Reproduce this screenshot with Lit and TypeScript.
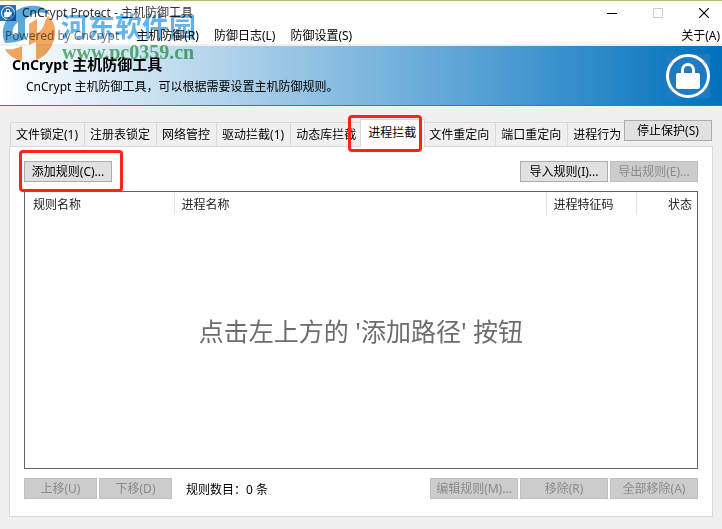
import { LitElement, html, css, svg } from "lit";
import { customElement, state } from "lit/decorators.js";

const TABS = [
  "文件锁定(1)",
  "注册表锁定",
  "网络管控",
  "驱动拦截(1)",
  "动态库拦截",
  "进程拦截",
  "文件重定向",
  "端口重定向",
  "进程行为",
];

const MENUS = ["主机防御(R)", "防御日志(L)", "防御设置(S)"];

const padlock = svg`
  <circle cx="22" cy="22" r="20.500" fill="none" stroke="#fff" stroke-width="3" />
  <path d="M12 19 h3 v-3 a7 7 0 0 1 14 0 v3 h3 q2 0 2 2 v12 q0 2 -2 2 h-20 q-2 0 -2 -2 v-12 q0 -2 2 -2 z M18 19 h8 v-3 a4 4 0 0 0 -8 0 z"
    fill="#fff" fill-rule="evenodd" />`;

@customElement("app-root")
export class AppRoot extends LitElement {
  @state() private active = 5;

  static styles = css`
    :host {
      display: flex;
      flex-direction: column;
      position: relative;
      min-height: 100vh;
      box-sizing: border-box;
      border-top: 1px solid #a8bf72;
      background: #f0f0f0;
      color: #000;
      font: 12px/16px "Noto Sans", "Noto Sans CJK SC", sans-serif;
      overflow: hidden;
    }
    * {
      box-sizing: border-box;
    }
    button {
      font: inherit;
      color: inherit;
      margin: 0;
      padding: 0;
      border: 0;
      background: none;
      white-space: nowrap;
    }
    .titlebar {
      display: flex;
      align-items: center;
      height: 24px;
      background: #fff;
    }
    .app-icon {
      width: 16px;
      height: 16px;
      padding: 1px;
      margin-right: 6px;
      background: #1f75b8;
    }
    .title {
      flex: 1;
      color: #333;
    }
    .window-button {
      display: flex;
      justify-content: center;
      align-items: center;
      width: 46px;
      height: 24px;
    }
    .window-button svg {
      width: 10px;
      height: 10px;
    }
    .close {
      margin-right: -5px;
    }
    .menubar {
      display: flex;
      align-items: center;
      gap: 15px;
      height: 21px;
      padding: 2px 2px 0 5px;
      background: #fff;
      border-bottom: 2px solid #f0f0f0;
    }
    .powered {
      color: #777;
      padding-right: 2px;
    }
    .about {
      margin-left: auto;
    }
    .banner {
      display: flex;
      justify-content: space-between;
      align-items: center;
      height: 60px;
      padding: 0 12px;
      border-bottom: 1px solid #2a76e6;
      background: linear-gradient(90deg, #fff, #0071bd);
    }
    .banner h1 {
      margin: 0;
      font-size: 15px;
      line-height: 20px;
      font-weight: 700;
    }
    .brand {
      font-size: 14px;
    }
    .banner p {
      margin: 2px 0 0 14px;
      line-height: 20px;
    }
    .badge {
      width: 44px;
      height: 44px;
      background: #1f7abf;
    }
    .content {
      flex: 1;
      display: flex;
      flex-direction: column;
      padding: 13px 9px 12px;
    }
    .tabrow {
      display: flex;
      align-items: flex-start;
      padding: 0 1px;
      margin-bottom: -1px;
      position: relative;
    }
    .tabs {
      display: flex;
      align-items: flex-end;
      flex: 1;
      min-width: 0;
      height: 28px;
      overflow: hidden;
    }
    .tab {
      flex: none;
      height: 25px;
      padding: 1px 6px 0 5px;
      border: solid #d9d9d9;
      border-width: 1px 0 1px 1px;
    }
    .tab.active {
      height: 28px;
      margin: 0 -2px;
      padding: 0 8px 1px 7px;
      border-width: 1px 1px 0;
      background: #fff;
      z-index: 1;
    }
    .btn {
      width: 88px;
      height: 21px;
      padding-top: 1px;
      border: 1px solid #adadad;
      background: #e1e1e1;
    }
    .btn:disabled {
      border-color: #bfbfbf;
      background: #ccc;
      color: #8b8b8b;
    }
    .btn.small {
      width: 73px;
    }
    .stop {
      margin-top: 1px;
    }
    .panel {
      flex: 1;
      display: flex;
      flex-direction: column;
      gap: 9px;
      padding: 14px;
      padding-bottom: 17px;
      border: 1px solid #d9d9d9;
      background: #fff;
    }
    .bar {
      display: flex;
      align-items: center;
      gap: 2px;
    }
    .spacer {
      flex: 1;
    }
    .count {
      margin-left: 12px;
      padding-top: 2px;
    }
    .list {
      flex: 1;
      display: flex;
      flex-direction: column;
      min-height: 200px;
      border: 1px solid #646464;
    }
    table {
      width: 100%;
      border-collapse: collapse;
      table-layout: fixed;
    }
    th {
      height: 23px;
      padding: 3px 7px 0;
      border-right: 1px solid #e5e5e5;
      font-weight: 400;
      text-align: left;
      color: #222;
    }
    th:last-child {
      border: 0;
      padding-right: 5px;
      text-align: right;
    }
    .col-name {
      width: 149px;
      padding-left: 8px;
    }
    .col-code {
      width: 90px;
    }
    .col-state {
      width: 61px;
    }
    .empty {
      flex: 1;
      display: flex;
      justify-content: center;
      align-items: center;
      margin: 0;
      padding-bottom: 22px;
      font-size: 25px;
      line-height: 32px;
      color: #6d6d6d;
    }
    .mark {
      position: absolute;
      z-index: 2;
      border: 3px solid #ff2318;
      border-radius: 4px;
      pointer-events: none;
    }
    .mark-add {
      left: 19px;
      top: 149px;
      width: 104px;
      height: 42px;
    }
    .mark-tab {
      left: 348px;
      top: 114px;
      width: 74px;
      height: 37px;
    }
    .watermark {
      position: absolute;
      left: 0;
      top: 0;
      width: 204px;
      height: 66px;
      opacity: 0.75;
      mix-blend-mode: multiply;
      pointer-events: none;
    }
    .site-name {
      font: 700 27px "Noto Sans CJK SC", sans-serif;
    }
    .site-url {
      font: 700 20px "Liberation Serif", serif;
    }
  `;

  render() {
    return html`
      <header class="titlebar">
        <svg class="app-icon" viewBox="0 0 44 44">${padlock}</svg>
        <span class="title">CnCrypt Protect - 主机防御工具</span>
        <button class="window-button" aria-label="最小化">
          <svg viewBox="0 0 10 10"><path d="M0 5.500h10" stroke="#000" /></svg>
        </button>
        <button class="window-button" aria-label="最大化" disabled>
          <svg viewBox="0 0 10 10"><path d="M.5 .5h9v9h-9z" fill="none" stroke="#ccc" /></svg>
        </button>
        <button class="window-button close" aria-label="关闭">
          <svg viewBox="0 0 10 10"><path d="M0 0l10 10M10 0L0 10" stroke="#000" stroke-width="1.2" /></svg>
        </button>
      </header>
      <nav class="menubar">
        <span class="powered">Powered by CnCrypt</span>
        ${MENUS.map((m) => html`<button>${m}</button>`)}
        <button class="about">关于(A)</button>
      </nav>
      <section class="banner">
        <div>
          <h1><span class="brand">CnCrypt</span> 主机防御工具</h1>
          <p>CnCrypt 主机防御工具，可以根据需要设置主机防御规则。</p>
        </div>
        <svg class="badge" viewBox="0 0 44 44">${padlock}</svg>
      </section>
      <main class="content">
        <div class="tabrow">
          <div class="tabs" role="tablist">
            ${TABS.map(
              (t, i) => html`<button
                role="tab"
                class="tab ${i === this.active ? "active" : ""}"
                aria-selected=${i === this.active ? "true" : "false"}
                @click=${() => (this.active = i)}
              >${t}</button>`
            )}
          </div>
          <button class="btn stop">停止保护(S)</button>
        </div>
        <section class="panel">
          <div class="bar">
            <button class="btn">添加规则(C)...</button>
            <span class="spacer"></span>
            <button class="btn">导入规则(I)...</button>
            <button class="btn" disabled>导出规则(E)...</button>
          </div>
          <div class="list">
            <table>
              <thead>
                <tr>
                  <th class="col-name">规则名称</th>
                  <th>进程名称</th>
                  <th class="col-code">进程特征码</th>
                  <th class="col-state">状态</th>
                </tr>
              </thead>
            </table>
            <p class="empty">点击左上方的 '添加路径' 按钮</p>
          </div>
          <div class="bar">
            <button class="btn small" disabled>上移(U)</button>
            <button class="btn small" disabled>下移(D)</button>
            <span class="count">规则数目：0 条</span>
            <span class="spacer"></span>
            <button class="btn" disabled>编辑规则(M)...</button>
            <button class="btn" disabled>移除(R)</button>
            <button class="btn" disabled>全部移除(A)</button>
          </div>
        </section>
      </main>
      <div class="mark mark-add"></div>
      <div class="mark mark-tab"></div>
      <svg class="watermark" viewBox="0 0 204 66">
        <path d="M5 42 C-2 26 9 8 29 5 C39 4 47 7 50 14 C43 10 35 11 30 15 L25 18 L25 38 C18 41 11 42 5 42 Z M13 34 L18 33 L18 21 C13 25 12 29 13 34 Z" fill="#238bd0" fill-rule="evenodd" />
        <path d="M5 48 C10 49 16 48 22 45 L22 60 C14 58 8 54 5 48 Z M29 23 L37 18 L37 32 C41 30 44 26 45 20 L48 15 C57 22 57 36 51 46 C47 53 42 57 36 59 L36 41 L29 44 Z" fill="#f08a2c" />
        <text class="site-name" x="61" y="36" fill="#2f9ae6">河东软件园</text>
        <text class="site-url" x="62" y="58" fill="#2f9f4a">www.pc0359.cn</text>
      </svg>
    `;
  }
}
